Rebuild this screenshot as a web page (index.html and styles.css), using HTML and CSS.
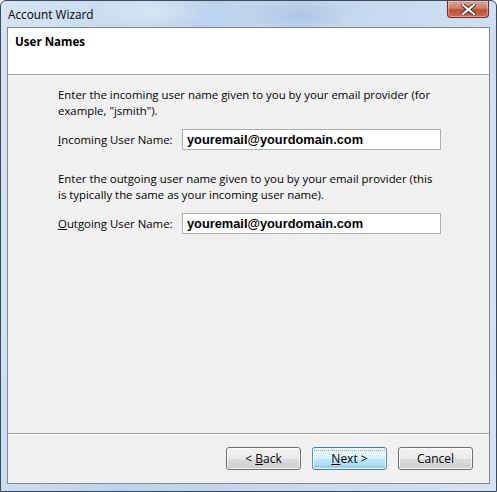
FILE: index.html
```html
<!DOCTYPE html>
<html lang="en">
  <head>
    <meta charset="UTF-8" />
    <title>Account Wizard</title>
    <link rel="stylesheet" href="styles.css">
  </head>
  <body>
    <div class="window">
      <div class="titlebar">
        <span class="title">Account Wizard</span>
        <button class="close" title="Close">
          <svg width="15" height="11" viewBox="0 0 15 11">
            <path d="M2 1 L13 10 M13 1 L2 10" stroke="#3a2320" stroke-width="4" stroke-linecap="square" />
            <path d="M2 1 L13 10 M13 1 L2 10" stroke="#ffffff" stroke-width="2.2" stroke-linecap="square" />
          </svg>
        </button>
      </div>
      <div class="client">
        <div class="header">
          <h2>User Names</h2>
        </div>
        <div class="content">
          <p>Enter the incoming user name given to you by your email provider (for<br />example, "jsmith").</p>
          <div class="field">
            <label for="incoming"><u>I</u>ncoming User Name:</label>
            <input type="text" id="incoming" value="youremail@yourdomain.com" />
          </div>
          <p>Enter the outgoing user name given to you by your email provider (this<br />is typically the same as your incoming user name).</p>
          <div class="field">
            <label for="outgoing"><u>O</u>utgoing User Name:</label>
            <input type="text" id="outgoing" value="youremail@yourdomain.com" />
          </div>
        </div>
        <div class="footer">
          <button class="btn">&lt; <u>B</u>ack</button>
          <button class="btn default"><span class="focus"><u>N</u>ext &gt;</span></button>
          <button class="btn">Cancel</button>
        </div>
      </div>
    </div>
  </body>
</html>
```

FILE: styles.css
```css
body {
  margin: 0;
  font-family: "Open Sans", "Noto Sans", sans-serif;
  font-size: 11.4px;
  color: #000;
}
.window {
  width: 497px;
  height: 492px;
  box-sizing: border-box;
  border: 1px solid #3c4a5a;
  border-radius: 6px 6px 0 0;
  background:
    radial-gradient(ellipse 60px 20px at 150px 10px, rgba(255, 255, 255, 0.35), transparent),
    radial-gradient(ellipse 50px 18px at 300px 14px, rgba(120, 150, 190, 0.25), transparent),
    linear-gradient(100deg, #d6e5f5 0%, #bcd3ed 35%, #c4d8ef 60%, #d4e4f4 100%);
  display: flex;
  flex-direction: column;
  padding: 0 6px 7px 6px;
}
.titlebar {
  height: 26px;
  display: flex;
  align-items: flex-start;
  justify-content: space-between;
}
.title {
  margin-top: 5px;
  margin-left: 1px;
  font-size: 11.8px;
}
.close {
  width: 42px;
  height: 17px;
  margin-right: 1px;
  border: 1px solid #6b2a22;
  border-top: none;
  border-radius: 0 0 4px 4px;
  background: linear-gradient(#dea295 0%, #d27e6b 45%, #bd5038 55%, #cf6e53 100%);
  padding: 0;
  display: flex;
  align-items: center;
  justify-content: center;
  box-shadow: inset 0 0 0 1px rgba(255, 255, 255, 0.35);
}
.client {
  flex: 1;
  border: 1px solid #828790;
  background: #f0f0f0;
  display: flex;
  flex-direction: column;
}
.header {
  height: 46px;
  background: #fff;
  border-bottom: 1px solid #a0a0a0;
  padding: 0 7px;
}
.header h2 {
  margin: 6px 0 0;
  font-size: 11.6px;
  font-weight: bold;
}
.content {
  flex: 1;
  padding: 12px 0 0 50px;
  border-bottom: 1px solid #a0a0a0;
}
.content p {
  margin: 0 0 10px;
  line-height: 16px;
}
.field {
  display: flex;
  align-items: center;
  margin-bottom: 21px;
}
.field label {
  width: 124px;
}
input[type="text"] {
  width: 259px;
  height: 21px;
  box-sizing: border-box;
  border: 1px solid #abadb3;
  padding: 0 4px;
  font-family: "Liberation Sans", Arial, sans-serif;
  font-size: 12.8px;
  font-weight: bold;
  color: #000;
  background: #fff;
}
.footer {
  height: 49px;
  display: flex;
  justify-content: flex-end;
  align-items: flex-start;
  padding: 12px 16px 0 0;
  box-sizing: border-box;
  border-top: 1px solid #fff;
  gap: 11px;
}
.btn {
  width: 75px;
  height: 23px;
  border: 1px solid #707070;
  border-radius: 3px;
  background: linear-gradient(#f2f2f2 0%, #ebebeb 50%, #dddddd 50%, #cfcfcf 100%);
  font-family: inherit;
  font-size: 12px;
  color: #000;
  padding: 0;
  box-shadow: inset 0 0 0 1px rgba(255, 255, 255, 0.7);
}
.btn.default {
  border-color: #3c7fb1;
  background: linear-gradient(#eaf6fd 0%, #d9f0fc 50%, #bee6fd 50%, #a7d9f5 100%);
}
.focus {
  display: inline-block;
  outline: 1px dotted #8aa6bc;
  padding: 0 18px;
  line-height: 15px;
}
```
